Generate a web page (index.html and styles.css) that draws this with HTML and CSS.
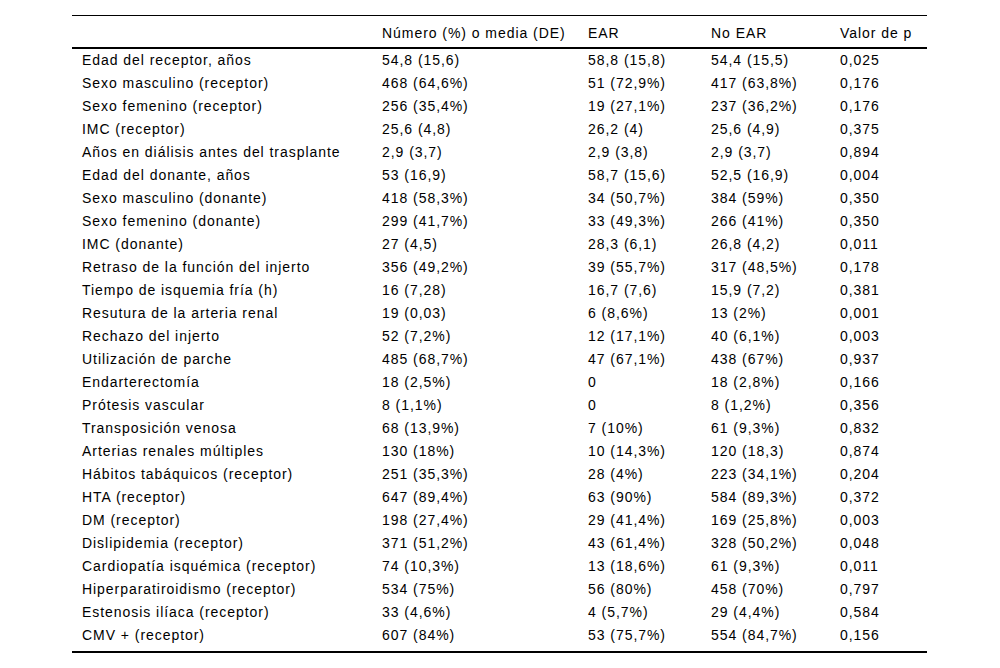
FILE: index.html
```html
<!DOCTYPE html>
<html lang="es">
<head>
<meta charset="utf-8">
<title>Tabla</title>
<link rel="stylesheet" href="styles.css">
</head>
<body>
<table class="data">
<colgroup>
<col class="c1"><col class="c2"><col class="c3"><col class="c4"><col class="c5">
</colgroup>
<thead>
<tr><th></th><th>Número (%) o media (DE)</th><th>EAR</th><th>No EAR</th><th>Valor de p</th></tr>
</thead>
<tbody>
<tr><td>Edad del receptor, años</td><td>54,8 (15,6)</td><td>58,8 (15,8)</td><td>54,4 (15,5)</td><td>0,025</td></tr>
<tr><td>Sexo masculino (receptor)</td><td>468 (64,6%)</td><td>51 (72,9%)</td><td>417 (63,8%)</td><td>0,176</td></tr>
<tr><td>Sexo femenino (receptor)</td><td>256 (35,4%)</td><td>19 (27,1%)</td><td>237 (36,2%)</td><td>0,176</td></tr>
<tr><td>IMC (receptor)</td><td>25,6 (4,8)</td><td>26,2 (4)</td><td>25,6 (4,9)</td><td>0,375</td></tr>
<tr><td>Años en diálisis antes del trasplante</td><td>2,9 (3,7)</td><td>2,9 (3,8)</td><td>2,9 (3,7)</td><td>0,894</td></tr>
<tr><td>Edad del donante, años</td><td>53 (16,9)</td><td>58,7 (15,6)</td><td>52,5 (16,9)</td><td>0,004</td></tr>
<tr><td>Sexo masculino (donante)</td><td>418 (58,3%)</td><td>34 (50,7%)</td><td>384 (59%)</td><td>0,350</td></tr>
<tr><td>Sexo femenino (donante)</td><td>299 (41,7%)</td><td>33 (49,3%)</td><td>266 (41%)</td><td>0,350</td></tr>
<tr><td>IMC (donante)</td><td>27 (4,5)</td><td>28,3 (6,1)</td><td>26,8 (4,2)</td><td>0,011</td></tr>
<tr><td>Retraso de la función del injerto</td><td>356 (49,2%)</td><td>39 (55,7%)</td><td>317 (48,5%)</td><td>0,178</td></tr>
<tr><td>Tiempo de isquemia fría (h)</td><td>16 (7,28)</td><td>16,7 (7,6)</td><td>15,9 (7,2)</td><td>0,381</td></tr>
<tr><td>Resutura de la arteria renal</td><td>19 (0,03)</td><td>6 (8,6%)</td><td>13 (2%)</td><td>0,001</td></tr>
<tr><td>Rechazo del injerto</td><td>52 (7,2%)</td><td>12 (17,1%)</td><td>40 (6,1%)</td><td>0,003</td></tr>
<tr><td>Utilización de parche</td><td>485 (68,7%)</td><td>47 (67,1%)</td><td>438 (67%)</td><td>0,937</td></tr>
<tr><td>Endarterectomía</td><td>18 (2,5%)</td><td>0</td><td>18 (2,8%)</td><td>0,166</td></tr>
<tr><td>Prótesis vascular</td><td>8 (1,1%)</td><td>0</td><td>8 (1,2%)</td><td>0,356</td></tr>
<tr><td>Transposición venosa</td><td>68 (13,9%)</td><td>7 (10%)</td><td>61 (9,3%)</td><td>0,832</td></tr>
<tr><td>Arterias renales múltiples</td><td>130 (18%)</td><td>10 (14,3%)</td><td>120 (18,3)</td><td>0,874</td></tr>
<tr><td>Hábitos tabáquicos (receptor)</td><td>251 (35,3%)</td><td>28 (4%)</td><td>223 (34,1%)</td><td>0,204</td></tr>
<tr><td>HTA (receptor)</td><td>647 (89,4%)</td><td>63 (90%)</td><td>584 (89,3%)</td><td>0,372</td></tr>
<tr><td>DM (receptor)</td><td>198 (27,4%)</td><td>29 (41,4%)</td><td>169 (25,8%)</td><td>0,003</td></tr>
<tr><td>Dislipidemia (receptor)</td><td>371 (51,2%)</td><td>43 (61,4%)</td><td>328 (50,2%)</td><td>0,048</td></tr>
<tr><td>Cardiopatía isquémica (receptor)</td><td>74 (10,3%)</td><td>13 (18,6%)</td><td>61 (9,3%)</td><td>0,011</td></tr>
<tr><td>Hiperparatiroidismo (receptor)</td><td>534 (75%)</td><td>56 (80%)</td><td>458 (70%)</td><td>0,797</td></tr>
<tr><td>Estenosis ilíaca (receptor)</td><td>33 (4,6%)</td><td>4 (5,7%)</td><td>29 (4,4%)</td><td>0,584</td></tr>
<tr class="last"><td>CMV + (receptor)</td><td>607 (84%)</td><td>53 (75,7%)</td><td>554 (84,7%)</td><td>0,156</td></tr>
</tbody>
</table>
</body>
</html>
```
FILE: styles.css
```css
html, body {
  margin: 0;
  padding: 0;
  background: #fff;
}
body {
  font-family: "Liberation Sans", Arial, sans-serif;
  font-size: 14px;
  letter-spacing: 0.95px;
  color: #000;
}
.data {
  margin: 15px 0 0 72px;
  width: 855px;
  table-layout: fixed;
  border-collapse: collapse;
  border-top: 1px solid #000;
  border-bottom: 2px solid #000;
}
.c1 { width: 300px; }
.c2 { width: 206px; }
.c3 { width: 123px; }
.c4 { width: 129px; }
.c5 { width: 97px; }
.data th,
.data td {
  text-align: left;
  font-weight: normal;
  padding: 0 0 0 10px;
  line-height: 23px;
  white-space: nowrap;
  vertical-align: top;
}
.data thead th {
  padding-top: 6px;
  padding-bottom: 2px;
  border-bottom: 2px solid #000;
}
.data tr.last td {
  padding-bottom: 4px;
}
```
